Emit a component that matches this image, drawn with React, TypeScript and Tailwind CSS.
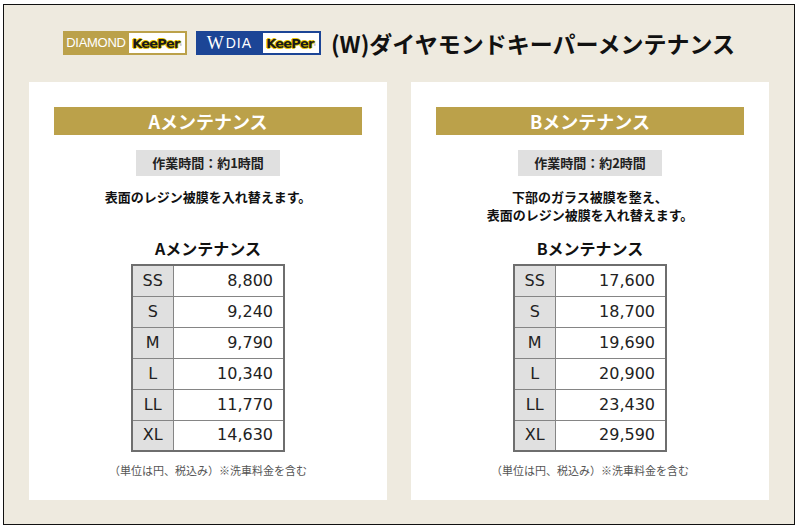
import React from 'react';

const jp = { fontFamily: '"Noto Sans CJK JP", "Noto Sans", sans-serif' };
const num = { fontFamily: '"DejaVu Sans", "Noto Sans CJK JP", sans-serif' };

const plans = [
  {
    name: 'Aメンテナンス',
    time: '作業時間：約1時間',
    desc: ['表面のレジン被膜を入れ替えます。'],
    prices: ['8,800', '9,240', '9,790', '10,340', '11,770', '14,630'],
  },
  {
    name: 'Bメンテナンス',
    time: '作業時間：約2時間',
    desc: ['下部のガラス被膜を整え、', '表面のレジン被膜を入れ替えます。'],
    prices: ['17,600', '18,700', '19,690', '20,900', '23,430', '29,590'],
  },
];

const sizes = ['SS', 'S', 'M', 'L', 'LL', 'XL'];

const KeePer = () => (
  <div className="h-full bg-white flex items-center justify-center border-2 border-l-0 border-inherit">
    <span
      className="text-[13px] font-black tracking-[-0.8px] text-[#1a1a1a] leading-none [text-shadow:1px_0_0_#e6c400,-1px_0_0_#e6c400,0_1px_0_#e6c400,0_-1px_0_#e6c400]"
      style={{ fontFamily: '"DejaVu Sans", sans-serif' }}
    >
      KeePer
    </span>
    <span className="text-[4px] text-[#888] self-end mb-[5px]">®</span>
  </div>
);

const PlanCard = ({ plan }: { plan: (typeof plans)[number] }) => (
  <div className="bg-white w-[358px] h-[418px] px-[25px] pt-[25px] flex flex-col items-center">
    <div className="w-full h-[28px] bg-[#bba14a] text-white text-[18px] font-bold flex items-center justify-center">
      {plan.name}
    </div>
    <div className="mt-[15px] h-[26px] px-4 bg-[#e0e0e0] text-[13px] font-bold text-[#222] flex items-center">
      {plan.time}
    </div>
    <div className="mt-[12px] h-[49px] text-[13px] font-bold text-[#111] leading-[18px] text-center">
      {plan.desc.map(d => (
        <p key={d}>{d}</p>
      ))}
    </div>
    <h3 className="h-[22px] leading-[22px] text-[16px] font-bold text-[#111]">{plan.name}</h3>
    <table className="mt-[5px] border-collapse border-2 border-[#6e6e6e] text-[16px] text-[#222]" style={num}>
      <tbody>
        {sizes.map((s, i) => (
          <tr key={s} className="h-[31px]">
            <td className="w-[41px] p-0 bg-[#e0e0e0] border border-[#858585] text-center">{s}</td>
            <td className="w-[111px] p-0 pr-[10px] border border-[#858585] text-right">{plan.prices[i]}</td>
          </tr>
        ))}
      </tbody>
    </table>
    <p className="mt-[10px] text-[11px] leading-[16px] text-[#555]">（単位は円、税込み）※洗車料金を含む</p>
  </div>
);

export default function App() {
  return (
    <div className="w-[802px] h-[527px] pt-[4px] pl-[3px]" style={jp}>
      <div className="w-[792px] h-[521px] border border-[#111] bg-[#eeeadf] px-[25px] pt-[26px]">
        <div className="flex items-center justify-center h-[24px]">
          <div className="w-[124px] h-[24px] bg-[#bba14a] flex border-[#bba14a]">
            <div
              className="w-[66px] text-white text-[13px] tracking-[-0.3px] flex items-center justify-center"
              style={{ fontFamily: '"Liberation Sans", sans-serif' }}
            >
              DIAMOND
            </div>
            <div className="flex-1 h-full border-[#bba14a]">
              <KeePer />
            </div>
          </div>
          <div className="ml-[9px] w-[125px] h-[24px] bg-[#1c4596] flex border-[#1c4596]">
            <div className="w-[67px] text-white flex items-center justify-center gap-[2px]">
              <span className="text-[18px] leading-none" style={{ fontFamily: '"Liberation Serif", serif' }}>W</span>
              <span className="text-[14px] tracking-[1px]" style={{ fontFamily: '"Liberation Sans", sans-serif' }}>DIA</span>
            </div>
            <div className="flex-1 h-full border-[#1c4596]">
              <KeePer />
            </div>
          </div>
          <h1 className="ml-[10px] text-[23px] font-bold text-[#111] leading-none">(W)ダイヤモンドキーパーメンテナンス</h1>
        </div>
        <div className="mt-[27px] flex justify-between">
          {plans.map(p => (
            <PlanCard key={p.name} plan={p} />
          ))}
        </div>
      </div>
    </div>
  );
}
